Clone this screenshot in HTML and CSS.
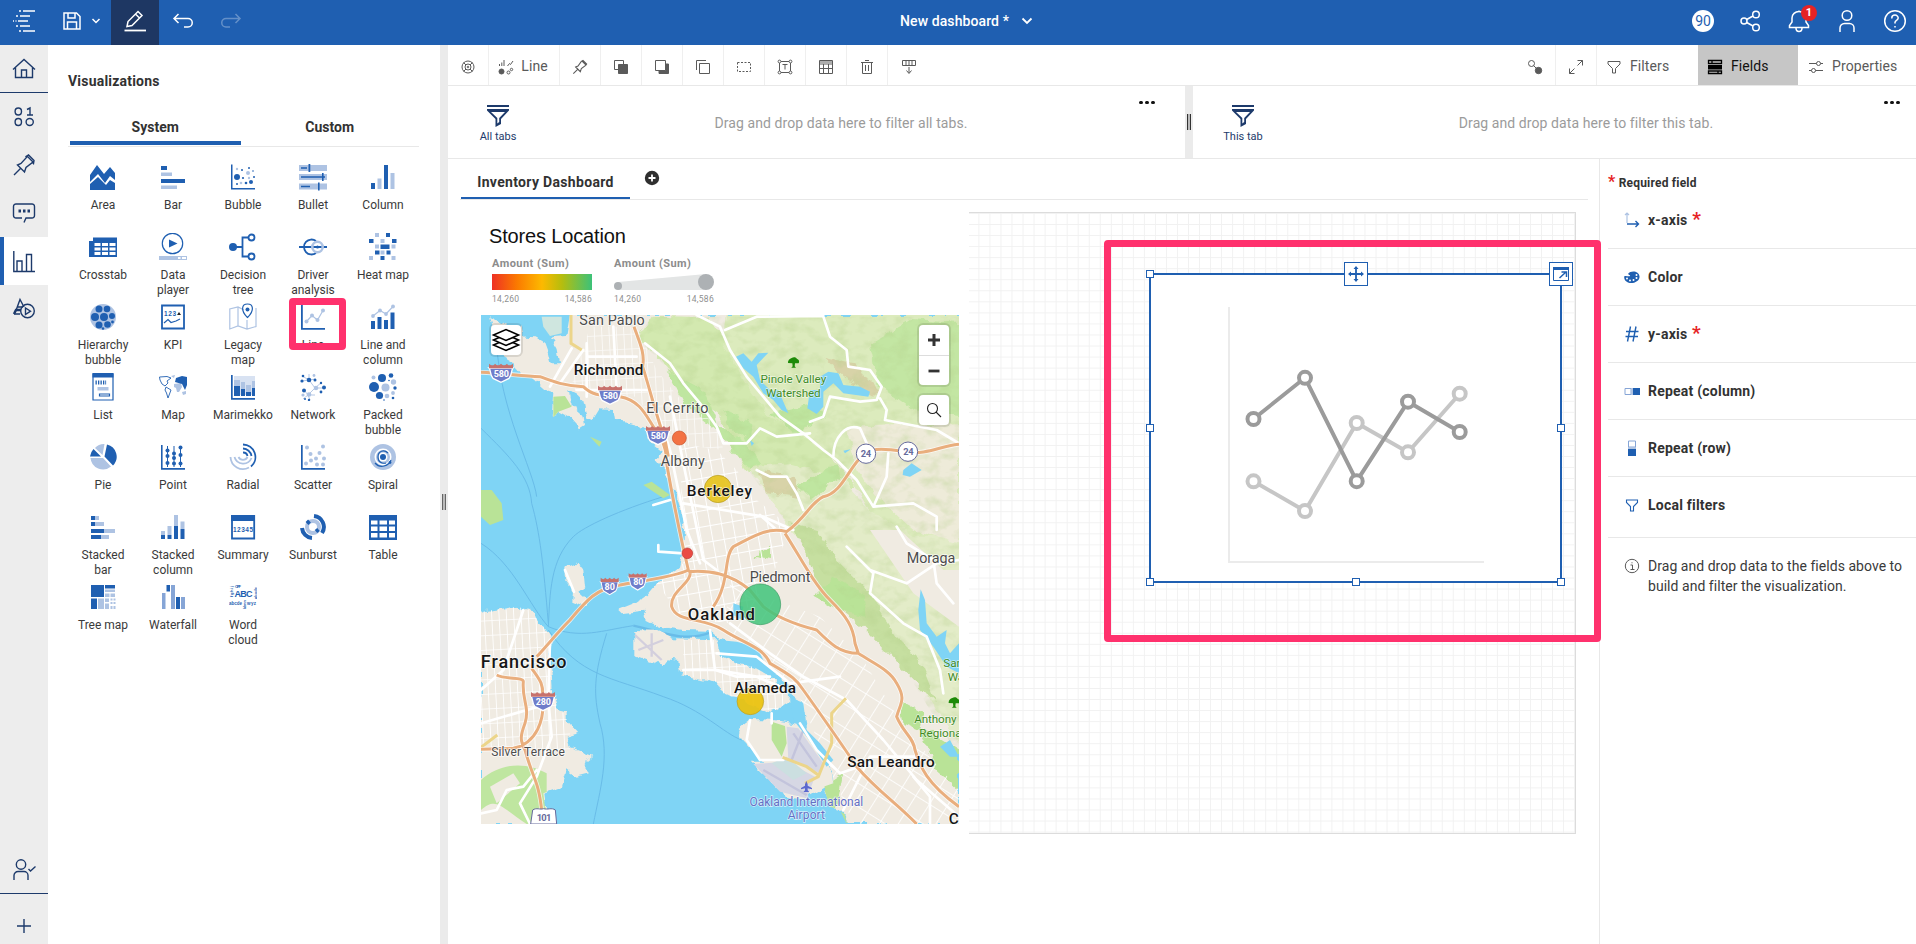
FILE: index.html
```html
<!DOCTYPE html>
<html lang="en">
<head>
<meta charset="utf-8">
<title>New dashboard</title>
<link rel="stylesheet" href="styles.css">
</head>
<body>
<header class="topbar">
  <div class="tb-item logo"><svg width="24" height="24" viewBox="0 0 24 24"><path d="M11 2H23M8 7H18M6 12H16M8 17H18M11 22H23M7 2h2M4 7h2M1 12h1M3.500 12h1M4 17h2M7 22h2" stroke="#fff" stroke-width="1.700"/></svg></div>
  <div class="tb-item save"><svg width="20" height="20" viewBox="0 0 20 20" class="w"><path d="M2 2H14.500L18 5.500V18H2ZM6 2V7H13V2M5.500 18V11H14.500V18"/></svg><svg width="10" height="8" viewBox="0 0 10 8" class="w"><path d="M1.500 2L5 5.500L8.500 2"/></svg></div>
  <div class="tb-item edit"><svg width="24" height="24" viewBox="0 0 24 24" class="w"><path d="M4 17.500L5 12.500L15 2.500L19 6.500L9 16.500ZM12.500 5L16.500 9"/><path d="M1.500 21.500H23" stroke-width="1.800"/></svg></div>
  <div class="tb-item"><svg width="22" height="18" viewBox="0 0 22 18" class="w"><path d="M6.500 2L2 6.500L6.500 11M2 6.500H16A4 4 0 0 1 16 15H12"/></svg></div>
  <div class="tb-item dim"><svg width="22" height="18" viewBox="0 0 22 18" class="w"><path d="M15.500 2L20 6.500L15.500 11M20 6.500H6A4 4 0 0 0 6 15H10"/></svg></div>
  <div class="title"><span>New dashboard *</span><svg width="12" height="8" viewBox="0 0 12 8" class="w"><path d="M1.500 1.500L6 6L10.500 1.500" stroke-width="1.800"/></svg></div>
  <div class="tb-right">
    <div class="tb-item"><span class="days">90</span></div>
    <div class="tb-item"><svg width="24" height="24" viewBox="0 0 24 24" class="w"><circle cx="5" cy="12" r="3"/><circle cx="17" cy="5.500" r="3.300"/><circle cx="17" cy="18.500" r="3.300"/><path d="M7.700 10.500L14 7M7.700 13.500L14 17"/></svg></div>
    <div class="tb-item bell"><svg width="24" height="24" viewBox="0 0 24 24" class="w"><path d="M12 3V1.500M2.500 18.500V16.500L5 13V9A7 6.500 0 0 1 19 9V13L21.500 16.500V18.500ZM9 19A3 3.500 0 0 0 15 19"/></svg><span class="badge">1</span></div>
    <div class="tb-item"><svg width="24" height="24" viewBox="0 0 24 24" class="w"><circle cx="12" cy="6.500" r="4.800"/><path d="M5 23V19A4.500 4.500 0 0 1 9.500 14.500H14.500A4.500 4.500 0 0 1 19 19V23"/></svg></div>
    <div class="tb-item"><svg width="24" height="24" viewBox="0 0 24 24" class="w"><circle cx="12" cy="12" r="10.300"/><path d="M8.800 9.500V9A3 2.700 0 0 1 15.200 9C15.200 11.500 12 11.200 12 13.500V14.500M12 17V18.500"/></svg></div>
  </div>
</header>
<div class="body">
  <nav class="rail">
    <div class="r-item r-line"><svg width="24" height="24" viewBox="0 0 24 24" class="n"><path d="M1 12.500L12 2.500L23 12.500M3.500 10.500V20.500H20.500V10.500M9.500 20.500V13H14.500V20.500"/></svg></div>
    <div class="r-item"><svg width="24" height="24" viewBox="0 0 24 24" class="n"><ellipse cx="6.300" cy="6.500" rx="3.200" ry="3.500"/><ellipse cx="6.300" cy="17" rx="3.200" ry="3.500"/><ellipse cx="17.700" cy="17" rx="3.600" ry="3.500"/><path d="M15 4.500L18 3V10M15 10H21"/></svg></div>
    <div class="r-item"><svg width="24" height="24" viewBox="0 0 24 24" class="n"><path d="M2 22L8.500 15.500M5.500 12L12.500 19L14 14.500L20.500 9.500L21.500 10.500L22 7.500L16.500 2L14 3.500L14.500 4.500L9 10.500ZM15 3L21.500 9.500"/></svg></div>
    <div class="r-item"><svg width="24" height="24" viewBox="0 0 24 24" class="n"><path d="M12 21.500L14 17H19.500A2.500 2.500 0 0 0 22.500 14.500V5.500A2.500 2.500 0 0 0 19.500 3H4.500A2.500 2.500 0 0 0 1.500 5.500V14.500A2.500 2.500 0 0 0 4.500 17H10"/><path d="M6.500 10h3M11 10h3M15.500 10h3" stroke-width="3" stroke-dasharray="2.500 9"/></svg></div>
    <div class="r-item on"><svg width="24" height="24" viewBox="0 0 24 24" class="n"><path d="M1.800 2V22.500H23M5 22V12H10V22M14.500 22V5.500H19.500V22"/></svg></div>
    <div class="r-item"><svg width="24" height="24" viewBox="0 0 24 24" class="n"><path d="M4 13.500L8 2.500L12 10M5 10H11M2 17H8"/><path d="M2 17L4 13H9" stroke-width="2.500"/><circle cx="15.500" cy="14" r="6.800"/><path d="M13.500 11V17.500L18.500 14.200Z"/></svg></div>
    <div class="r-gap"></div>
    <div class="r-item r-line"><svg width="24" height="24" viewBox="0 0 24 24" class="n"><circle cx="9" cy="6.500" r="4.700"/><path d="M2 22V17.500A4 4 0 0 1 6 13.500H12A4 4 0 0 1 16 17.500V22M16.500 11L18.500 13L23.500 8.500"/></svg></div>
    <div class="r-item r-add"><svg width="24" height="24" viewBox="0 0 24 24" class="n"><path d="M12 5V19M5 12H19"/></svg></div>
  </nav>
  <aside class="panel">
    <h2>Visualizations</h2>
    <div class="ptabs"><div class="ptab sel">System</div><div class="ptab">Custom</div></div>
    <div class="tiles">
      <div class="tile"><svg viewBox="0 0 28 28"><path class="d" d="M1 12L8 2L15 11L21 4L26 10V17L21 13L16 20L9 11L1 19Z"/><path class="d" d="M1 21L9 14L17 22L21 17L26 20V27H1Z"/></svg><span>Area</span></div>
      <div class="tile"><svg viewBox="0 0 28 28"><path class="d" d="M2 3h6v4H2zM2 16h24v4H2z"/><path class="l" d="M2 9.500h11v3.500H2zM2 22.500h16v3.500H2z"/></svg><span>Bar</span></div>
      <div class="tile"><svg viewBox="0 0 28 28"><path class="d" d="M2 1.500h1.500V25H26v1.500H2z"/><g class="d"><circle cx="8" cy="14" r="3"/><circle cx="22" cy="19" r="2"/><circle cx="13" cy="7" r="1"/><circle cx="20" cy="5" r="1"/><circle cx="25" cy="14" r="1"/><circle cx="17" cy="20" r="1.300"/><circle cx="8" cy="21" r="1"/><circle cx="14" cy="15" r="1.100"/><circle cx="24" cy="8" r=".8"/></g><g class="l"><circle cx="19" cy="10" r="2"/><circle cx="8" cy="6" r="1.200"/><circle cx="20" cy="15" r="1.200"/><circle cx="12" cy="20" r="1.300"/></g></svg><span>Bubble</span></div>
      <div class="tile"><svg viewBox="0 0 28 28"><path class="l" d="M0 2h28v6H0zM0 11h28v6H0zM0 20.500h28v6H0z"/><path class="d" d="M2 4.200h6v1.600H2zM9.500 1h1.800v8H9.500zM2 13.200h24v1.600H2zM23 10h1.600v8H23zM2 22.700h9v1.600H2zM19 19.500h1.600v8H19z"/></svg><span>Bullet</span></div>
      <div class="tile"><svg viewBox="0 0 28 28"><path class="d" d="M2 20h4v6H2zM15 2h4v24h-4z"/><path class="l" d="M8.500 15.500h4V26h-4zM21.500 10h4v16h-4z"/></svg><span>Column</span></div>

      <div class="tile"><svg viewBox="0 0 28 28"><path class="d" d="M4 4.500H28V24H0V8H4z"/><path d="M5.500 10h6v3h-6zM13 10h6v3h-6zM20.500 10h6v3h-6zM5.500 14.500h6v3h-6zM13 14.500h6v3h-6zM20.500 14.500h6v3h-6zM5.500 19h6v3h-6zM13 19h6v3h-6zM20.500 19h6v3h-6z" fill="#fff"/></svg><span>Crosstab</span></div>
      <div class="tile"><svg viewBox="0 0 28 28"><circle cx="13.500" cy="10.500" r="10.200" class="ds"/><path class="d" d="M10 6.500V14.500L18.500 10.500z"/><path class="l" d="M0 23h28v4H0z"/><path d="M19 24h2.500v2H19zM23 24h4v2h-4z" fill="#fff"/></svg><span>Data<br>player</span></div>
      <div class="tile"><svg viewBox="0 0 28 28"><circle class="d" cx="4" cy="14" r="4"/><path class="ds mid" d="M7 14H13M19 4.500H13.500V23.500H19"/><circle class="ds mid" cx="22.500" cy="4.500" r="3"/><circle class="ds mid" cx="22.500" cy="23.500" r="3"/></svg><span>Decision tree</span></div>
      <div class="tile"><svg viewBox="0 0 28 28"><path class="ds mid" d="M0 14H28M17 8A7.500 7.500 0 1 0 17 20"/><circle class="ls thick" cx="18.500" cy="14" r="5.200"/><circle class="d" cx="18.500" cy="14" r="1.500"/></svg><span>Driver analysis</span></div>
      <div class="tile"><svg viewBox="0 0 28 28"><path class="l" d="M6 0h4v4H6zM11.500 6h4v4h-4zM22.500 11.500h4v4h-4zM6 11.500h4v4H6zM0 23h4v4H0zM11.500 17.500h4v4h-4zM22.500 23h4v4h-4z"/><path class="d" d="M17 0h4v4h-4zM0 6h4.500v4H0zM23 6h4.500v4H23zM11.500 11.500h9v4.500h-9zM6 17.500h4.500v4H6zM17.500 17.500h4v4h-4zM11.500 23h4v4h-4z"/></svg><span>Heat map</span></div>

      <div class="tile"><svg viewBox="0 0 28 28"><circle class="l" cx="14" cy="14" r="13"/><g class="d"><circle cx="6" cy="14" r="4"/><circle cx="15" cy="14" r="4"/><circle cx="10" cy="6" r="3.500"/><circle cx="18" cy="6" r="3.300"/><circle cx="23" cy="13" r="3"/><circle cx="10" cy="22" r="3.500"/><circle cx="18.500" cy="21.500" r="3.300"/><circle cx="23.500" cy="19" r="1.400"/><circle cx="14" cy="25.500" r="1.300"/></g></svg><span>Hierarchy bubble</span></div>
      <div class="tile"><svg viewBox="0 0 28 28"><path class="ds mid" d="M3 2.500H25V25.500H3z"/><text x="5" y="13" class="svgt" font-size="6.500" textLength="12">123</text><path d="M18 12L20 9L22 12z" fill="#222"/><path class="ds" d="M5 20L9 16.500L12 19.500L17 18L21 16"/></svg><span>KPI</span></div>
      <div class="tile"><svg viewBox="0 0 28 28"><path class="ls" d="M15 7L9 4L.8 6V26L9 23L18 26L27 23.500V5M9 4V23M18 17V26"/><path class="ds" d="M18.500 14.500C11 7 13 1 18.500 1S26 7 18.500 14.500Z"/><circle class="d" cx="18.500" cy="6.500" r="2"/></svg><span>Legacy map</span></div>
      <div class="tile"><svg viewBox="0 0 28 28"><path class="d" d="M2 1.500h1.800V25H26v1.700H2z"/><path class="ls" d="M7.500 18.500L13 12.500L18.500 17L24 7.500"/><g class="l"><circle cx="7.500" cy="18.500" r="2"/><circle cx="13" cy="12.500" r="2"/><circle cx="18.500" cy="17" r="2"/><circle cx="24" cy="7.500" r="2"/></g></svg><span>Line</span></div>
      <div class="tile"><svg viewBox="0 0 28 28"><path class="d" d="M2 18h4v8H2zM8.500 14h4v12h-4zM15 17h4v9h-4zM21.500 9.500h4V26h-4z"/><path class="ls" d="M4 13L11 7.500L17 11L24 3.500"/><g class="l"><circle cx="4" cy="13" r="1.900"/><circle cx="11" cy="7.500" r="1.900"/><circle cx="17" cy="11" r="1.900"/><circle cx="24" cy="3.500" r="1.900"/></g></svg><span>Line and column</span></div>

      <div class="tile"><svg viewBox="0 0 28 28"><path class="ds" d="M4 1H24V27H4z"/><path class="d" d="M3.500 0h21v4.500h-21zM6.500 7.500h1.300v4H6.500zM9 7.500h1.300v4H9zM11.500 7.500h1.300v4h-1.300zM14 7.500h1.300v4H14zM16.300 7.500h.8v4h-.8z"/><path class="l" d="M8.500 14h11v3.500h-11z"/><path class="ds" d="M10.500 21h10v2h-10z"/></svg><span>List</span></div>
      <div class="tile"><svg viewBox="0 0 28 28"><path class="ds thin" d="M.5 4L8 3.500L12 5L8 8L9 10L6 13L3 11L1 7ZM7 14L12 17L9 25L7.500 20L6 17Z"/><path class="l" d="M15 11L22 10L23 14L20 19L18 19L17 15L15 14ZM12 3l4-1-1 3zM23 19l4-1v3l-3 1z"/><path class="d" d="M17 5L23 3L28 4V12L26 17L23 11L16 9Z"/></svg><span>Map</span></div>
      <div class="tile"><svg viewBox="0 0 28 28"><path d="M5 3h21v19H5z" fill="#d8e2f2"/><path class="l" d="M5 7h6v7H5zM12 9h4v9h-4zM17 12h5v8h-5zM23 8h3v8h-3z"/><path class="d" d="M2 2h1.700V25H26v1.700H2zM5 13h6v10H5zM12 16h4v7h-4zM17 19h5v4h-5zM23 15h3v8h-3z"/></svg><span>Marimekko</span></div>
      <div class="tile"><svg viewBox="0 0 28 28"><path class="ls thin" d="M10 7L3 3M10 7L3 8M10 7L10 1M10 7L17 6M10 7L16 15M16 15L9 22M9 22L5 17M9 22L4 26M9 22L11 27M9 22L16 22M16 15L23 9M16 15L26 15"/><g class="d"><circle cx="10" cy="7" r="2.300"/><circle cx="3" cy="8" r="1.600"/><circle cx="4" cy="3" r="1.300"/><circle cx="16" cy="7" r="1.500"/><circle cx="5" cy="17.500" r="2"/><circle cx="25" cy="14.500" r="2"/><circle cx="22" cy="10" r="1.200"/><circle cx="22" cy="19" r="1.400"/><circle cx="10" cy="27" r="1.200"/><circle cx="6" cy="26" r="1"/></g><g class="l"><circle cx="17" cy="15" r="2.300"/><circle cx="10" cy="21.500" r="2.300"/><circle cx="15" cy="2.500" r="1.400"/><circle cx="4" cy="22" r="1.600"/></g></svg><span>Network</span></div>
      <div class="tile"><svg viewBox="0 0 28 28"><g class="d"><circle cx="13" cy="5" r="4"/><circle cx="5" cy="14" r="5"/><circle cx="22" cy="2.500" r="2.300"/><circle cx="10.500" cy="22.500" r="3.600"/><circle cx="26" cy="15" r="1.700"/><circle cx="24" cy="25" r="1.300"/><circle cx="20" cy="7.500" r=".8"/><circle cx="15" cy="27" r=".8"/></g><g class="l"><circle cx="16.500" cy="14.500" r="4"/><circle cx="24.500" cy="9" r="2.700"/><circle cx="4.500" cy="4.500" r="2"/><circle cx="18" cy="23" r="2.300"/><circle cx="24" cy="20" r="1.900"/></g></svg><span>Packed bubble</span></div>

      <div class="tile"><svg viewBox="0 0 28 28"><path class="l" d="M1.500 15H14L22 23.500A12.500 12.500 0 0 1 1.500 15ZM6 5A12 12 0 0 1 15.500 1L13.500 12Z"/><path class="d" d="M18 1.500A12.500 12.500 0 0 1 24 22.500L15.500 13.500ZM4.500 6L12 13.500H1A13 13 0 0 1 4.500 6Z"/></svg><span>Pie</span></div>
      <div class="tile"><svg viewBox="0 0 28 28"><path class="d" d="M2 2h1.600V25H26v1.700H2zM8 3h1V24H8zM14.500 3h1V24h-1zM21 3h1V24h-1z"/><g class="d"><circle cx="8.500" cy="7.500" r="2"/><circle cx="8.500" cy="13" r="2"/><circle cx="8.500" cy="20" r="2"/><circle cx="15" cy="10.500" r="2"/><circle cx="15" cy="15" r="2"/><circle cx="15" cy="20.500" r="2"/><circle cx="21.500" cy="4.500" r="2"/><circle cx="21.500" cy="12" r="2"/><circle cx="21.500" cy="20.500" r="2"/></g></svg><span>Point</span></div>
      <div class="tile"><svg viewBox="0 0 28 28"><path class="ls mid" d="M1.500 14A12.500 12.500 0 0 0 20 24.500M5.500 14A9 9 0 0 0 22.500 15M9.500 14A5 5 0 0 0 18.500 14"/><path class="ds mid" d="M14 1.500A12.500 12.500 0 0 1 22 23.500M14 5.500A9 9 0 0 1 22.500 13M14 9.500A4.500 4.500 0 0 1 18.500 13"/></svg><span>Radial</span></div>
      <div class="tile"><svg viewBox="0 0 28 28"><path class="d" d="M2 2h1.700V25H26v1.700H2z"/><g class="l"><circle cx="8" cy="4.500" r="2"/><circle cx="24" cy="3.500" r="2"/><circle cx="11.500" cy="11" r="2"/><circle cx="20.500" cy="10" r="2"/><circle cx="25" cy="15.500" r="2"/><circle cx="17" cy="15.500" r="2"/><circle cx="7" cy="20.500" r="2"/><circle cx="12" cy="17.500" r="2"/><circle cx="18" cy="21.500" r="2"/><circle cx="24" cy="21.500" r="2"/></g></svg><span>Scatter</span></div>
      <div class="tile"><svg viewBox="0 0 28 28"><circle class="l" cx="14" cy="14" r="13"/><circle cx="14" cy="14" r="8.500" fill="#fff"/><circle class="l" cx="14" cy="14" r="7"/><circle cx="14" cy="14" r="4.500" fill="#fff"/><circle class="d" cx="14" cy="14" r="3"/><path class="ds" d="M19 10C15 6 9 8 9 14C9 19 13 21 17 20M22 17C20 23 11 26 6 20"/><circle class="d" cx="21" cy="19.500" r="1.400"/></svg><span>Spiral</span></div>

      <div class="tile"><svg viewBox="0 0 28 28"><path class="d" d="M2 3h4v4H2zM2 9h4v4H2zM2 16h13v4H2zM2 22h10v4H2z"/><path class="l" d="M6 3h4v4H6zM6 9h9v4H6zM15 16h11v4H15zM12 22h8v4h-8z"/></svg><span>Stacked bar</span></div>
      <div class="tile"><svg viewBox="0 0 28 28"><path class="l" d="M2 18h4v4H2zM8.500 13h4v9h-4zM15 2h4v12h-4zM21.500 8.500h4V16h-4z"/><path class="d" d="M2 22h4v4H2zM8.500 22h4v4h-4zM15 13h4v13h-4zM21.500 16h4v10h-4z"/></svg><span>Stacked column</span></div>
      <div class="tile"><svg viewBox="0 0 28 28"><path class="ds mid" d="M3 3H25.200V25.500H3z"/><path class="d" d="M2 2h24v6H2z"/><text x="4" y="19" class="svgt" font-size="6.500" textLength="20">12345</text></svg><span>Summary</span></div>
      <div class="tile"><svg viewBox="0 0 28 28"><circle class="ls wide" cx="14" cy="14" r="6"/><path class="ds wide" d="M15 3A11 11 0 0 1 23 20M3 15A11 11 0 0 0 13 25"/><path class="ds wide" d="M8 10.500L10.500 8M17 18.500L19.500 16.500"/></svg><span>Sunburst</span></div>
      <div class="tile"><svg viewBox="0 0 28 28"><path class="d" d="M0 2h28v25H0z"/><path d="M2 7.500h6.500v4H2zM10.500 7.500H18v4h-7.500zM20 7.500h6v4h-6zM2 13.500h6.500v4.500H2zM10.500 13.500H18V18h-7.500zM20 13.500h6V18h-6zM2 20h6.500v4.500H2zM10.500 20H18v4.500h-7.500zM20 20h6v4.500h-6z" fill="#fff"/></svg><span>Table</span></div>

      <div class="tile"><svg viewBox="0 0 28 28"><path class="d" d="M2 2h13v12H2zM2 15.500h6V26H2zM16 2h10v3.500H16z"/><path class="l" d="M9 15.500h6V26H9zM16 6.500h10V9H16zM16 10.500h4.500V14H16zM21.500 10.500H26V14h-4.500zM16 15.500h4V19h-4zM21.500 15.500h2v2h-2zM24.500 15.500h2v2h-2zM16 20.500h4V26h-4zM21.500 19h2v2h-2zM24.500 19h2v2h-2zM21.500 23h2v3h-2zM24.500 23h2v3h-2z"/></svg><span>Tree map</span></div>
      <div class="tile"><svg viewBox="0 0 28 28"><path d="M3 10h3.500v16H3zM12 2h4v24h-4zM22 14h4v12h-4z" fill="#86a5d6"/><path class="d" d="M7.500 2H11v6.500H7.500zM17 14h4v12h-4z"/></svg><span>Waterfall</span></div>
      <div class="tile"><svg viewBox="0 0 28 28"><g class="svgt"><text x="5.500" y="14" font-size="9" textLength="18">ABC</text><text x="0" y="21.500" font-size="4.500" textLength="13">abcde</text><text x="18" y="21.500" font-size="4.500" textLength="9">wyz</text><text x="6" y="5" font-size="4" textLength="6">OPF</text><text transform="translate(4 14) rotate(-90)" font-size="4" textLength="11">fghij</text><text transform="translate(27.500 16) rotate(-90)" font-size="4" textLength="12">abode</text><text transform="translate(16.500 26) rotate(-90)" font-size="4" textLength="9">klmn</text></g></svg><span>Word<br>cloud</span></div>
    </div>
    <div class="mark mark-tile"></div>
  </aside>
  <div class="splitter"><i></i></div>
  <main class="main">
    <div class="toolbar">
      <div class="t-item"><svg width="16" height="16" viewBox="0 0 16 16" class="g"><circle cx="8" cy="8" r="6"/><circle cx="8" cy="8" r="3"/><circle cx="8" cy="8" r=".8"/><path d="M3.500 3.500L6 6M12.500 3.500L10 6M3.500 12.500L6 10M12.500 12.500L10 10"/></svg></div>
      <div class="t-item t-line"><svg width="16" height="16" viewBox="0 0 16 16" class="g"><path d="M1.500 7V5M3.800 7V3.500M6 7V1M9.500 7L11.500 4.500L12.500 5.500L15 2"/><circle cx="3.500" cy="12.500" r="2.500" fill="#5a5a5a"/><circle cx="10.500" cy="13.500" r="1.500"/><circle cx="13.500" cy="10.500" r="1.200"/></svg><span>Line</span></div>
      <div class="t-item"><svg width="16" height="16" viewBox="0 0 24 24" class="g pin"><path d="M2 22L8.500 15.500M5.500 12L12.500 19L14 14.500L20.500 9.500L22 7.500L16.500 2L14 3.500L9 10.500ZM15 3L21.500 9.500"/></svg></div>
      <div class="t-item"><svg width="16" height="16" viewBox="0 0 16 16" class="g"><path d="M1.500 1.500H10.500V10.500H1.500z"/><path d="M5.500 5.500H14.500V14.500H5.500z" fill="#5a5a5a"/></svg></div>
      <div class="t-item"><svg width="16" height="16" viewBox="0 0 16 16" class="g"><path d="M5 5H14.500V14.500H5z" fill="#5a5a5a"/><path d="M1.500 1.500H11.500V11.500H1.500z" fill="#fff"/></svg></div>
      <div class="t-item"><svg width="16" height="16" viewBox="0 0 16 16" class="g"><path d="M4.500 4.500H14.500V14.500H4.500zM1.500 11V1.500H11"/></svg></div>
      <div class="t-item"><svg width="16" height="16" viewBox="0 0 16 16" class="g"><path d="M1.500 3.500H14.500V12.500H1.500z" stroke-dasharray="2 1.500"/></svg></div>
      <div class="t-item"><svg width="16" height="16" viewBox="0 0 16 16" class="g"><path d="M4 2.500H12M4 13.500H12M2.500 4V12M13.500 4V12M5.500 5.500H10.500M8 5.500V10.500"/><circle cx="2.500" cy="2.500" r="1.400"/><circle cx="13.500" cy="2.500" r="1.400"/><circle cx="2.500" cy="13.500" r="1.400"/><circle cx="13.500" cy="13.500" r="1.400"/></svg></div>
      <div class="t-item"><svg width="16" height="16" viewBox="0 0 16 16" class="g"><path d="M1.500 1.500H14.500V14.500H1.500zM1.500 5H14.500M1.500 9.500H14.500M5.500 5V14M10.500 5V14M1.500 3H14.500"/></svg></div>
      <div class="t-item"><svg width="16" height="16" viewBox="0 0 16 16" class="g"><path d="M2 3.500H14M3.500 3.500V14.500H12.500V3.500M6 1.500H10M6.500 6V12M9.500 6V12"/></svg></div>
      <div class="t-item last"><svg width="16" height="16" viewBox="0 0 16 16" class="g"><path d="M1.500 1.500H14.500V6.500H1.500zM5 1.500V6.500M8 1.500V6.500M11 1.500V6.500M8 8V14M5.500 11.500L8 14.500L10.500 11.500"/></svg></div>
      <div class="t-gap"></div>
      <div class="t-item"><svg width="16" height="16" viewBox="0 0 16 16" class="g"><circle cx="4.500" cy="4.500" r="3"/><path d="M6.500 6.500L9 9"/><circle cx="11.500" cy="11.500" r="3.200" fill="#5a5a5a"/></svg></div>
      <div class="t-item"><svg width="16" height="16" viewBox="0 0 16 16" class="g"><path d="M9.500 1.500H14.500V6.500M14.500 1.500L9.500 6.500M6.500 14.500H1.500V9.500M1.500 14.500L6.500 9.500"/></svg></div>
      <div class="t-item t-filters"><svg width="16" height="16" viewBox="0 0 16 16" class="g"><path d="M2 2.500H14V5L9.500 9.500V14H6.500V9.500L2 5Z"/></svg><span>Filters</span></div>
      <div class="t-item t-fields"><svg width="16" height="16" viewBox="0 0 16 16" fill="none" stroke="#000" stroke-width="1.300"><path d="M1.500 1.500H14.500V4.500H1.500zM1.500 12H14.500V14.500H1.500zM5 1.500V4M11 12V14.500"/><path d="M1 6H15V10.500H1z" fill="#000" stroke="none"/></svg><span>Fields</span></div>
      <div class="t-item t-props"><svg width="16" height="16" viewBox="0 0 16 16" class="g"><path d="M1 4.500H8.500M12.500 4.500H15M1 11.500H3.500M7.500 11.500H15"/><circle cx="10.500" cy="4.500" r="2"/><circle cx="5.500" cy="11.500" r="2"/></svg><span>Properties</span></div>
    </div>
    <div class="filters">
      <div class="fpane f-all"><div class="fico"><svg width="22" height="22" viewBox="0 0 22 22"><path d="M0 0H22V2H0zM0 4H22V5.500L14 14V19L8.500 22V14L0 5.500zM4 7L10.300 13V18.500L12.200 17V13L18 7z" fill="#1d3a6b" fill-rule="evenodd"/></svg><span>All tabs</span></div><div class="fhint">Drag and drop data here to filter all tabs.</div><div class="fdots"><i></i><i></i><i></i></div></div>
      <div class="fsplit"><i></i></div>
      <div class="fpane"><div class="fico"><svg width="22" height="22" viewBox="0 0 22 22"><path d="M0 0H22V2H0zM0 4H22V5.500L14 14V19L8.500 22V14L0 5.500zM4 7L10.300 13V18.500L12.200 17V13L18 7z" fill="#1d3a6b" fill-rule="evenodd"/></svg><span>This tab</span></div><div class="fhint">Drag and drop data here to filter this tab.</div><div class="fdots"><i></i><i></i><i></i></div></div>
    </div>
    <div class="work">
      <section class="stage">
        <div class="dtabs"><div class="dtab">Inventory Dashboard</div><svg class="plus" width="16" height="16" viewBox="0 0 16 16"><circle cx="8" cy="8" r="7.200" fill="#2f2f2f"/><path d="M8 4.500V11.500M4.500 8H11.500" stroke="#fff" stroke-width="1.800"/></svg></div>
        <div class="canvas">
          <div class="sheet"></div>
          <article class="mapw">
            <h3>Stores Location</h3>
            <div class="legends">
              <div class="legend"><b>Amount (Sum)</b><div class="ramp"></div><p><span>14,260</span><span>14,586</span></p></div>
              <div class="legend"><b>Amount (Sum)</b><svg width="100" height="16" viewBox="0 0 100 16"><path d="M4 8L92 0V16H4z" fill="#e3e5e5"/><circle cx="4" cy="12" r="4" fill="#adb1b4"/><circle cx="92" cy="8" r="8" fill="#adb1b4"/></svg><p><span>14,260</span><span>14,586</span></p></div>
            </div>
            <div class="map">
              <svg width="478" height="509" viewBox="33 315 1434 1527">
                <defs>
                  <path id="east" d="M60 315L75 330 110 345 155 350 160 380 200 382 230 400 245 460 267 460 258 410 240 382 290 378 300 315H1467V1842H1130L1110 1800 1080 1790 1060 1730 1090 1720 1085 1680 1010 1560 995 1475 970 1460 960 1420 930 1400 880 1360 860 1315 800 1305 745 1285 720 1262 640 1260 570 1250 530 1230 520 1202 455 1210 445 1200 495 1180 530 1155 560 1120 600 1095 630 1070 640 1030 642 960 632 900 615 840 600 820 585 780 560 750 575 725 530 690 530 665 500 640 435 630 430 600 385 598 365 630 350 622 340 575 320 555 292 540 300 580 340 615 345 645 330 655 300 622 270 605 245 622 250 550 235 545 190 505 150 490 125 455 100 440 80 420Z"/>
                  <g id="isles">
                    <path d="M490 1260L560 1262 610 1285 740 1288 750 1335 800 1360 870 1375 930 1420 958 1440 955 1475 905 1510 860 1490 760 1450 740 1415 680 1405 630 1390 625 1350 590 1345 575 1365 490 1335Z"/>
                    <path d="M800 1560L840 1530 905 1532 990 1545 1060 1630 1085 1690 1090 1720 1010 1765 950 1760 845 1655 880 1655 820 1590Z"/>
                    <path d="M33 1205L140 1190 180 1200 220 1250 245 1290 240 1360 245 1440 265 1505 290 1510 290 1530 325 1570 290 1580 300 1615 370 1640 340 1665 360 1690 320 1700 290 1680 275 1730 220 1750 225 1790 260 1842H33Z"/>
                    <path d="M283 1070L305 1060 340 1080 345 1130 325 1145 352 1170 350 1192 310 1175 312 1145 285 1110Z"/>
                  </g>
                  <clipPath id="landclip"><use href="#east"/></clipPath>
                  <clipPath id="isleclip"><path d="M490 1260L560 1262 610 1285 740 1288 750 1335 800 1360 870 1375 930 1420 958 1440 955 1475 905 1510 860 1490 760 1450 740 1415 680 1405 630 1390 625 1350 590 1345 575 1365 490 1335ZM33 1205L140 1190 180 1200 220 1250 245 1290 240 1360 245 1440 265 1505 290 1510 290 1530 325 1570 290 1580 300 1615 340 1640 275 1730 220 1750 225 1790 260 1842H33Z"/></clipPath>
                  <pattern id="gridA" width="34" height="48" patternUnits="userSpaceOnUse" patternTransform="rotate(-10)"><path d="M0 0H34M0 0V48" stroke="#fff" stroke-width="6" fill="none"/></pattern>
                  <pattern id="gridB" width="48" height="60" patternUnits="userSpaceOnUse" patternTransform="rotate(32)"><path d="M0 0H48M0 0V60" stroke="#fff" stroke-width="6" fill="none"/></pattern>
                  <pattern id="gridC" width="22" height="44" patternUnits="userSpaceOnUse" patternTransform="rotate(-3)"><path d="M0 0H22M0 0V44" stroke="#fff" stroke-width="5" fill="none"/></pattern>
                  <filter id="rough" x="0" y="0" width="1" height="1"><feTurbulence type="fractalNoise" baseFrequency=".035" numOctaves="2" seed="4"/><feDisplacementMap in="SourceGraphic" scale="26" xChannelSelector="R" yChannelSelector="G"/></filter>
                  <filter id="relief" x="0" y="0" width="1" height="1"><feTurbulence type="fractalNoise" baseFrequency=".022 .03" numOctaves="3" seed="11"/><feColorMatrix values="0 0 0 0 .45 0 0 0 0 .62 0 0 0 0 .25 2.400 0 0 0 -1.050"/><feComposite in2="SourceGraphic" operator="in"/></filter>
                  <g id="i580"><path d="M-36-13C-30-8-34 8-24 18L0 30 24 18C34 8 30-8 36-13Z" fill="#6f7dca" stroke="#fff" stroke-width="4"/><path d="M-36-26C-28-20-22-20-18-26-12-20-6-20 0-26 6-20 12-20 18-26 22-20 28-20 36-26V-12H-36Z" fill="#c7716c"/></g>
                  <g id="tree"><path d="M-17 3C-18-5-12-10-6-12 0-16 8-14 10-9 17-8 18 2 14 4H4L3 13 7 17H-7L-3 13-4 4Z" fill="#1d8a08"/></g>
                </defs>
                <rect x="33" y="315" width="1434" height="1527" fill="#7fd4f5"/>
                <g fill="none" stroke="#69bce8" stroke-width="3"><path d="M33 655C120 740 180 800 185 880C210 970 220 1060 235 1240M80 400C90 600 190 780 200 860M580 860C450 900 340 950 310 980C240 1050 240 1150 235 1250M33 1000C130 1060 180 1190 235 1250M235 1250C330 1290 400 1260 490 1247M235 1260C330 1400 420 1400 580 1460C700 1500 760 1570 815 1590M410 1270C370 1400 370 1450 390 1540C420 1640 390 1740 370 1842"/><path d="M490 1247C560 1260 640 1300 720 1268" stroke-width="7"/></g>
                <g filter="url(#rough)" fill="#f0ebe2"><use href="#east"/><use href="#isles"/></g>
                <path d="M215 320H275V370L240 378 220 350Z" fill="#cfe6df"/>
                <g clip-path="url(#landclip)">
                  <g filter="url(#rough)">
                    <path d="M500 390L545 320 720 325 770 400 830 490 900 590 980 650 1040 690 1090 750 1160 830 1060 860 980 850 880 770 830 790 790 700 740 610 640 540 560 430Z" fill="#d3e9b0"/>
                    <path d="M770 315H1480V1000H1320L1200 900 1130 780 1020 690 900 620 840 540 760 400Z" fill="#dcebbd"/>
                    <path d="M830 770L960 760 1110 800 1200 900 1330 980 1480 980V1620L1400 1500 1300 1340 1150 1190 1050 1060 960 960 900 860Z" fill="#e3ecc8"/>
                    <path d="M1130 650L1467 640V1000L1330 960 1230 870 1160 780Z" fill="#eeebd9"/>
                    <path d="M1200 400L1320 330 1480 340V620L1330 600 1220 520Z" fill="#c3e6a3"/>
                    <path d="M590 480L700 540 740 640 830 700 880 760 830 770 740 660 640 580ZM760 600L850 640 840 700 780 650ZM900 610L1040 580 1070 620 980 670ZM980 830L1100 760 1110 800 1020 870Z" fill="#bfe6a0"/>
                    <path d="M960 940L1040 960 1110 1060 1200 1150 1280 1280 1350 1350 1400 1480 1320 1400 1180 1250 1060 1160 1010 1030Z" fill="#c6dfa0"/>
                    <path d="M1090 1100L1180 1150 1190 1220 1100 1200 1030 1160ZM1290 1470L1360 1510 1350 1560 1300 1540ZM1340 1540L1467 1620V1740L1400 1680ZM850 1040L900 1010 900 1050ZM1060 1730L1120 1690 1100 1790 1130 1842H1080Z" fill="#b9e397"/>
                    <path d="M1060 440L1150 460 1230 540 1210 560 1120 500ZM860 780L970 800 990 860 890 850Z" fill="#d8d3a8"/>
                  </g>
                  <path d="M500 390L545 320H1467V1640L1300 1370 1060 1090 900 870 740 650 560 440Z" filter="url(#relief)" opacity=".34"/>
                  <path d="M1200 960L1290 960 1420 1080 1467 1080V1250L1330 1150Z" fill="#f0ebe2"/>
                </g>
                <g clip-path="url(#landclip)">
                  <path d="M630 700L740 720 800 780 860 870 960 950 900 1120 790 1240 640 1230 560 1120 640 1060Z" fill="url(#gridA)"/>
                  <path d="M360 350L500 350 560 480 640 580 740 640 760 720 600 700 500 560 300 540Z" fill="url(#gridC)" opacity=".75"/>
                  <path d="M780 1120L1050 1220 1180 1350 1300 1550 1467 1740V1842H1150L1080 1680 980 1440 760 1270Z" fill="url(#gridB)" opacity=".85"/>
                </g>
                <g clip-path="url(#isleclip)"><path d="M33 1190H300V1620H33zM640 1290H970V1500H640z" fill="url(#gridC)"/><path d="M33 1710C100 1650 180 1660 230 1690V1842H170C90 1790 80 1760 33 1800Z" fill="#bfe6a0"/><path d="M60 1730L130 1690 150 1720 80 1780Z" fill="#f0ebe2"/></g>
                <path d="M905 1535L945 1548 950 1600 935 1640 905 1590ZM250 560L285 558 305 590 265 605 250 622ZM360 680L395 695 388 710ZM520 825L545 815 600 855 580 865ZM33 840L65 840 95 880 100 930 60 945 33 920Z" fill="#b9e397"/>
                <path d="M950 1550L985 1555 1060 1660 1050 1690 955 1650ZM850 1662L950 1655 1035 1700 1010 1765 930 1745Z" fill="#d6d7e4"/><path d="M905 1660L950 1640 1010 1690 970 1710Z" fill="#cbdfe0"/><path d="M970 1570L1040 1670M1000 1560L965 1650M880 1680L1010 1755" stroke="#c3c4dc" stroke-width="7" fill="none"/>
                <path d="M495 1275L575 1350M505 1320L580 1290M545 1270V1340" stroke="#d3cfdd" stroke-width="7" fill="none"/>
                <g fill="#7fd4f5"><path d="M798 440L820 430 845 455 865 430 895 428 860 465 870 510 905 545 925 540 940 575 955 610 935 600 910 570 880 550 850 500 820 475ZM1050 500L1075 485 1105 490 1120 525 1170 530 1200 545 1195 560 1120 550 1090 520 1060 545 1060 590 1040 612 1012 595 1020 540 1050 540ZM1300 780L1325 760 1355 780 1320 800 1298 795ZM1120 722L1142 718 1125 730ZM840 690L852 700 845 708Z"/><path d="M1352 1138L1365 1170 1370 1240 1400 1280 1430 1260 1425 1300 1440 1330 1467 1300V1390L1430 1370 1390 1310 1350 1260 1345 1200ZM1410 1610L1440 1590 1467 1640 1440 1640ZM745 1290L800 1295 860 1310 890 1370 925 1390 905 1402 850 1370 790 1350 750 1330ZM960 1460L1000 1480 1010 1560 1050 1600 1090 1650 1070 1670 1010 1580 970 1530ZM790 1180L820 1190 815 1230 790 1215ZM225 395L250 398 262 455 248 458ZM300 552L322 560 345 620 330 610Z"/></g>
                <g fill="none" stroke="#fff" stroke-width="8" stroke-linejoin="round" stroke-linecap="round">
                  <path d="M305 415L240 530M340 420L270 520M320 540L540 540M680 315L750 350 780 420 830 500 880 560 930 620 1000 670 1060 720 1100 750 1160 810 1210 890 1330 880 1400 920 1400 960M1060 320L1080 380 1130 420 1135 470 1200 480 1235 530 1220 570 1170 575 1080 560 1060 620 1020 635M1230 565L1250 600 1245 630 1400 660 1467 700M765 360L860 320 1060 318M1090 740C1090 680 1130 640 1170 655L1190 700M1255 730L1250 800 1210 890"/>
                  <path d="M525 400L600 460 640 520 690 580 740 650 760 700 830 700 870 655 920 680 1020 670M860 780L900 800 950 800 980 850 1000 900"/>
                  <path d="M600 560L640 760 700 1050 740 1080M518 470L540 540 600 720 650 960 690 1060M640 880L880 920 970 960M870 915L920 960"/>
                  <path d="M780 1240L900 1330 1000 1400 1130 1470 1240 1590 1340 1710 1467 1820M720 1260L735 1380 800 1400 900 1400M740 1330L860 1340 960 1420 1110 1400M640 1380L740 1380 860 1400 930 1430M990 1540L1040 1620 1110 1690 1200 1660M840 1530L830 1590 870 1650 940 1650M905 1510V1540M1120 1800L1200 1640 1340 1640"/>
                  <path d="M1130 1010L1200 1080 1310 1120 1400 1060 1467 1050M1140 1020L1210 1090 1200 1150 1300 1240 1370 1280 1410 1380 1420 1450M1280 950L1310 1000 1390 1050 1400 1120 1450 1180M1380 1842V1760L1330 1700"/>
                  <path d="M565 1005V1025L640 1030M550 885L600 870M240 1290L235 1470 245 1580 200 1700 150 1780 180 1842M33 1810L80 1800 110 1740 160 1730 200 1680M33 1440L100 1380 160 1200M33 1540L240 1480M285 1080L312 1145M350 400V560M350 440H500M430 350L440 540"/>
                </g>
                <g fill="none" stroke="#ecd58a" stroke-width="9"><path d="M303 315V400L335 420M1128 1465L1085 1510V1600L1065 1650 1045 1700 1005 1720M938 1642L1010 1670 1045 1695M33 1612L82 1575"/></g>
                <g fill="none" stroke="#fff" stroke-opacity=".7" stroke-width="14"><path id="hw" d="M33 487C100 490 150 497 210 500C250 515 280 527 340 530C370 560 400 556 450 560C510 570 530 620 550 650C580 690 590 720 590 760C600 820 615 900 640 1015L655 1080C620 1100 500 1115 450 1125C380 1135 350 1170 300 1230C260 1270 220 1320 200 1340M492 350C510 400 525 430 518 470C540 540 560 620 585 690L595 740M655 1085C720 1080 780 1090 840 1140L880 1190C930 1230 1000 1250 1040 1260C1080 1300 1110 1330 1165 1330C1210 1360 1260 1380 1280 1420C1310 1470 1290 1480 1280 1520C1300 1570 1330 1580 1335 1620C1350 1670 1370 1720 1467 1790M660 1080C670 1120 600 1140 605 1190C620 1240 700 1220 760 1260C820 1300 880 1310 900 1360C970 1400 980 1410 1000 1440C1050 1510 1100 1580 1160 1670C1220 1740 1280 1780 1340 1842M730 1190C780 1120 760 1040 790 1010C850 980 890 950 950 965C1010 920 1020 880 1060 860C1110 850 1130 790 1165 750C1190 710 1240 715 1300 725C1380 735 1400 710 1467 703M945 970C990 1040 1030 1120 1080 1170C1130 1220 1150 1250 1155 1300L1165 1330M80 1395C110 1410 160 1400 160 1415C155 1470 180 1490 165 1540C150 1580 150 1590 165 1620C190 1710 205 1710 215 1800M185 1375C210 1410 220 1420 218 1460C225 1530 200 1600 130 1615L33 1618"/></g>
                <use href="#hw" fill="none" stroke="#e9ae7d" stroke-width="9"/>
                <g stroke-width="2"><circle cx="628" cy="684" r="21" fill="#f26a38" fill-opacity=".94" stroke="#c4512b"/><circle cx="744" cy="837" r="41" fill="#e5c113" fill-opacity=".88" stroke="#b39a22"/><circle cx="652" cy="1030" r="16" fill="#ea4b43" stroke="#b93832"/><circle cx="871" cy="1183" r="61" fill="#40c47a" fill-opacity=".85" stroke="#3b9b63"/><circle cx="841" cy="1474" r="40" fill="#ebc20c" fill-opacity=".93" stroke="#b69e2a"/></g>
                <use href="#i580" x="93" y="487"/><use href="#i580" x="420" y="553"/><use href="#i580" x="564" y="674"/><use href="#i580" transform="translate(419 1127) scale(.75 .9)"/><use href="#i580" transform="translate(503 1113) scale(.75 .9)"/><use href="#i580" x="219" y="1472"/>
                <g class="sh"><text x="94" y="500" textLength="46">580</text><text x="421" y="566" textLength="46">580</text><text x="565" y="687" textLength="46">580</text><text x="419" y="1139" textLength="31">80</text><text x="505" y="1124" textLength="31">80</text><text x="220" y="1485" textLength="46">280</text></g>
                <path d="M188 1800C200 1792 210 1800 221 1796C232 1800 245 1792 256 1800L260 1842H182Z" fill="#fff" stroke="#666a9c" stroke-width="3"/>
                <g fill="#fff" stroke="#666a9c" stroke-width="3"><circle cx="1188" cy="731" r="29"/><circle cx="1314" cy="725" r="29"/></g>
                <g class="rt"><text x="222" y="1834" textLength="44">101</text><text x="1188" y="741" textLength="31">24</text><text x="1315" y="735" textLength="31">24</text></g>
                <use href="#tree" x="971" y="456"/><use href="#tree" x="1453" y="1476"/>
                <path d="M1009 1713L1013 1723V1727L1026 1734V1738L1013 1735V1741L1018 1746H1000L1005 1741V1735L993 1738V1734L1005 1727V1723Z" fill="#5b68cf"/>
                <g class="city"><text x="416" y="495" textLength="209">Richmond</text><text x="748" y="858" textLength="196">Berkeley</text><text x="754" y="1229" textLength="202" class="big">Oakland</text><text x="161" y="1374" textLength="257" class="huge">Francisco</text><text x="885" y="1448" textLength="186">Alameda</text><text x="1263" y="1672" textLength="262">San Leandro</text><text x="1451" y="1841">C</text></g>
                <g class="town"><text x="426" y="346" textLength="196">San Pablo</text><text x="622" y="608" textLength="186">El Cerrito</text><text x="638" y="768" textLength="132">Albany</text><text x="930" y="1116" textLength="182">Piedmont</text><text x="1383" y="1059" textLength="146">Moraga</text><text x="174" y="1639" textLength="221" class="small">Silver Terrace</text></g>
                <g class="park"><text x="970" y="519" textLength="197">Pinole Valley</text><text x="970" y="562" textLength="164">Watershed</text><text x="1420" y="1370" class="cut">San</text><text x="1433" y="1413" class="cut">Wat</text><text x="1396" y="1539" textLength="127">Anthony</text><text x="1348" y="1582" class="cut">Regional</text></g>
                <g class="air"><text x="1009" y="1788" textLength="341">Oakland International</text><text x="1009" y="1828" textLength="112">Airport</text></g>
              </svg>
              <div class="mbtn layers"><svg width="30" height="30" viewBox="0 0 30 30" fill="#fff" stroke="#000" stroke-width="1.600"><path d="M2.500 20L15 14.500 27.500 20 15 25.500Z"/><path d="M2.500 15L15 9.500 27.500 15 15 20.500Z"/><path d="M2.500 10L15 4.500 27.500 10 15 15.500Z"/></svg></div>
              <div class="mctl"><div class="mbtn zoomer"><div><svg width="14" height="14" viewBox="0 0 14 14"><path d="M7 1V13M1 7H13" stroke="#333" stroke-width="3"/></svg></div><div><svg width="14" height="14" viewBox="0 0 14 14"><path d="M1.500 7H12.500" stroke="#333" stroke-width="2.800"/></svg></div></div>
              <div class="mbtn"><svg width="16" height="16" viewBox="0 0 16 16" fill="none" stroke="#222" stroke-width="1.100"><circle cx="6.500" cy="6.500" r="5"/><path d="M10 10L15 15"/></svg></div></div>
            </div>
          </article>
          <article class="linew">
            <svg width="256" height="256" viewBox="0 0 256 256" fill="none"><path d="M1 0V255H256" stroke="#ebebeb" stroke-width="2"/>
              <path d="M25.500 174.300L77 204L128.700 116L180 145.300L231.700 86.700" stroke="#c6c6c6" stroke-width="4"/><path d="M25.500 112L77 70.800L128.700 174.200L180 94.700L231.700 125" stroke="#9b9b9b" stroke-width="4"/>
              <g stroke="#c6c6c6" stroke-width="4" fill="#fff"><circle cx="25.500" cy="174.300" r="6"/><circle cx="77" cy="204" r="6"/><circle cx="128.700" cy="116" r="6"/><circle cx="180" cy="145.300" r="6"/><circle cx="231.700" cy="86.700" r="6"/></g>
              <g stroke="#9b9b9b" stroke-width="4" fill="#fff"><circle cx="25.500" cy="112" r="6"/><circle cx="77" cy="70.800" r="6"/><circle cx="128.700" cy="174.200" r="6"/><circle cx="180" cy="94.700" r="6"/><circle cx="231.700" cy="125" r="6"/></g></svg>
            <i class="h tl"></i><i class="h ml"></i><i class="h mr"></i><i class="h bl"></i><i class="h bm"></i><i class="h br"></i>
            <span class="hb move"><svg width="16" height="16" viewBox="0 0 16 16"><path d="M8 1V15M1 8H15" stroke="#1f5fb1" stroke-width="1.800"/><path d="M5.500 3L8 0L10.500 3zM5.500 13L8 16L10.500 13zM3 5.500L0 8L3 10.500zM13 5.500L16 8L13 10.500z" fill="#1f5fb1"/></svg></span>
            <span class="hb pop"><svg width="16" height="14" viewBox="0 0 16 14" fill="none" stroke="#1f5fb1"><path d="M.5 1.500H15.500V13.500H.5z"/><path d="M0 1.500H16" stroke-width="3"/><path d="M6.500 11L13 5M8.500 5H13.500V10" stroke-width="1.500"/></svg></span>
          </article>
          <div class="mark mark-widget"></div>
        </div>
      </section>
      <aside class="fields">
        <div class="req"><em>*</em> Required field</div>
        <div class="slot"><svg width="16" height="16" viewBox="0 0 16 16" fill="none"><path d="M3 1V11M1 3L3 1L5 3" stroke="#aec3e3" stroke-width="1.200"/><path d="M3 12H14M11.500 9L14.500 12L11.500 15" stroke="#1f5fb1" stroke-width="1.400"/></svg><span>x-axis <em>*</em></span></div>
        <div class="slot"><svg width="16" height="16" viewBox="0 0 16 16"><path d="M4 5C7 1 15 2 15.500 7.500C16 12 9 15.500 4 13.500C1 12.500-.5 9.500 .5 7C3 6.500 5 8 6 7C6.500 6 5 6 4 5Z" fill="#1f5fb1"/><g fill="#fff"><circle cx="3" cy="9.500" r="1"/><circle cx="6" cy="11.500" r="1"/><circle cx="9.500" cy="11" r="1"/><circle cx="12.500" cy="9" r="1"/><circle cx="12.500" cy="6" r="1"/></g></svg><span>Color</span></div>
        <div class="slot"><svg width="16" height="16" viewBox="0 0 16 16" fill="none" stroke="#1f5fb1" stroke-width="1.400"><path d="M6.500 .5L3.500 15.500M12 .5L9 15.500M2 5.500H14.500M1.500 10.500H14"/></svg><span>y-axis <em>*</em></span></div>
        <div class="slot"><svg width="16" height="16" viewBox="0 0 16 16"><path d="M1 5.500H7V11.500H1z" fill="#fff" stroke="#86a5d6"/><path d="M7 5H9V12H7z" fill="#aec3e3"/><path d="M9 5H16V12H9z" fill="#1f5fb1"/></svg><span>Repeat (column)</span></div>
        <div class="slot"><svg width="16" height="16" viewBox="0 0 16 16"><path d="M4.500 1H11.500V7H4.500z" fill="#fff" stroke="#86a5d6"/><path d="M4 7H12V9H4z" fill="#aec3e3"/><path d="M4 9H12V16H4z" fill="#1f5fb1"/></svg><span>Repeat (row)</span></div>
        <div class="slot end"><svg width="16" height="16" viewBox="0 0 16 16" fill="none" stroke="#1f5fb1" stroke-width="1.100"><path d="M2.500 3H13.500V5.500L9.500 9.500V14H6.500V9.500L2.500 5.500Z"/></svg><span>Local filters</span></div>
        <div class="note"><svg width="16" height="16" viewBox="0 0 16 16" class="g"><circle cx="8" cy="8" r="6.700"/><path d="M6.500 7H8.500V11.500M6.500 11.500H10.500M8 4.300V5.300"/></svg><p>Drag and drop data to the fields above to build and filter the visualization.</p></div>
      </aside>
    </div>
  </main>
</div>
</body>
</html>
```
FILE: styles.css
```css
* { box-sizing: border-box; }
html, body { margin: 0; height: 100%; }
body { width: 1916px; height: 944px; overflow: hidden; background: #fff; font-family: Roboto, "Open Sans", sans-serif; font-size: 14px; color: #3a3a3a; display: flex; flex-direction: column; }
svg { display: block; flex: none; }
h2, h3, p { margin: 0; }

.w { fill: none; stroke: #fff; stroke-width: 1.5; }
.n { fill: none; stroke: #1d3a6b; stroke-width: 1.4; }
.g { fill: none; stroke: #5a5a5a; stroke-width: 1; }
.pin { stroke-width: 1.6; }
.d { fill: #1f5fb1; }
.l { fill: #aec3e3; }
.ds { fill: none; stroke: #1f5fb1; stroke-width: 1.2; }
.ls { fill: none; stroke: #aec3e3; stroke-width: 1.2; }
.thin { stroke-width: .9; }
.mid { stroke-width: 1.8; }
.thick { stroke-width: 2.6; }
.wide { stroke-width: 4; }
.svgt { fill: #1f5fb1; font-family: "Liberation Sans", sans-serif; font-weight: bold; }

.topbar { height: 45px; flex: none; background: #1f5fb1; display: flex; overflow: hidden; position: relative; color: #fff; }
.tb-item { width: 48px; height: 42px; display: flex; align-items: center; justify-content: center; flex: none; }
.save { width: 63px; justify-content: flex-start; padding-left: 14px; gap: 9px; }
.edit { background: #1e3763; height: 45px; padding-bottom: 4px; }
.dim { opacity: .3; }
.title { position: absolute; left: 900px; top: 0; height: 41px; display: flex; align-items: center; gap: 12px; font-weight: 500; letter-spacing: .1px; }
.tb-right { display: flex; margin-left: auto; margin-right: -3px; }
.days { width: 22px; height: 22px; border-radius: 50%; background: #fff; color: #1f5fb1; font-size: 14px; line-height: 23px; text-align: center; }
.bell { position: relative; }
.badge { position: absolute; left: 26px; top: 5px; width: 16px; height: 16px; border-radius: 50%; background: #e62325; font-size: 11px; font-weight: 700; line-height: 16px; text-align: center; }

.body { flex: 1; display: flex; min-height: 0; }
.rail { width: 48px; background: #ededed; display: flex; flex-direction: column; flex: none; }
.r-item { height: 48px; display: flex; align-items: center; justify-content: center; flex: none; }
.r-line { border-bottom: 1px solid #1d3a6b; }
.on { background: #fff; border-left: 4px solid #1f5fb1; padding-right: 4px; }
.r-gap { flex: 1; }
.r-add { height: 50px; padding-top: 14px; }

.panel { width: 392px; flex: none; padding: 27px 20px 0; position: relative; }
.panel h2 { font-size: 14px; line-height: 18px; font-weight: 700; color: #323232; letter-spacing: .2px; }
.ptabs { display: flex; width: 351px; margin-top: 27px; border-bottom: 1px solid #e8e8e8; padding-left: 2px; }
.ptab { width: 172px; height: 28px; line-height: 20px; text-align: center; font-weight: 700; font-size: 14px; color: #323232; margin-right: 4px; }
.sel { border-bottom: 4px solid #1f5fb1; margin-bottom: 1px; }
.tiles { display: grid; grid-template-columns: repeat(5, 70px); grid-auto-rows: 70px; margin-top: 8px; }
.tile { display: flex; flex-direction: column; align-items: center; padding-top: 8px; font-size: 12px; line-height: 15px; text-align: center; }
.tile svg { width: 28px; height: 28px; margin-bottom: 7px; }
.tile span { width: 62px; }
.mark { position: absolute; border: 7px solid #ff316d; border-radius: 4px; }
.mark-tile { left: 241px; top: 253px; width: 57px; height: 52px; }
.splitter { width: 8px; background: #ebebeb; flex: none; padding: 449px 0 0 2px; }
.splitter i, .fsplit i { display: block; width: 4px; height: 16px; border: solid #666; border-width: 0 1px; background: #bbb; }

.main { flex: 1; display: flex; flex-direction: column; min-width: 0; }
.toolbar { height: 41px; flex: none; border-bottom: 1px solid #e8e8e8; display: flex; color: #5a5a5a; }
.t-item { width: 41px; border-right: 1px solid #efefef; display: flex; align-items: center; justify-content: center; padding-top: 3px; flex: none; gap: 8px; }
.t-item span { margin-top: -1px; letter-spacing: .1px; }
.t-line { width: 71px; gap: 7px; padding-right: 2px; }
.last { border-right: 0; }
.t-gap { flex: 1; }
.t-filters { width: 101px; justify-content: flex-start; padding-left: 9px; border: 0; }
.t-fields { width: 100px; justify-content: flex-start; padding-left: 9px; border: 0; background: #c6c6c6; color: #111; }
.t-props { width: 118px; justify-content: flex-start; padding-left: 10px; border: 0; }
.filters { height: 73px; flex: none; border-bottom: 1px solid #e8e8e8; display: flex; }
.fpane { display: flex; flex: 1; }
.f-all { flex: none; width: 737px; }
.fico { width: 100px; display: flex; flex-direction: column; align-items: center; padding-top: 19px; gap: 3px; color: #1d3a6b; font-size: 11px; line-height: 14px; }
.fhint { width: 586px; text-align: center; line-height: 74px; color: #9b9b9b; letter-spacing: .08px; }
.fdots { display: flex; gap: 2.5px; padding: 14.5px 0 0 5px; }
.fdots i { width: 3.6px; height: 3.6px; border-radius: 50%; background: #111; }
.fsplit { width: 8px; background: #ebebeb; padding: 28px 0 0 2px; }
.fsplit i { border-color: #333; }

.work { flex: 1; display: flex; min-height: 0; }
.stage { flex: 1; padding: 0 0 0 12px; display: flex; flex-direction: column; }
.dtabs { width: 1128px; height: 41px; border-bottom: 1px solid #e8e8e8; display: flex; padding-left: 1px; flex: none; }
.dtab { width: 169px; height: 40px; border-bottom: 2px solid #1f5fb1; text-align: center; line-height: 47px; font-weight: 700; color: #323232; letter-spacing: .32px; }
.plus { margin: 11px 0 0 14px; }
.canvas { position: relative; flex: 1; }
.sheet { position: absolute; left: 11px; top: 12px; width: 1105px; height: 622px; border: 1px solid #dcdcdc; background-image: linear-gradient(to right, #f1f1f1 1px, transparent 1px), linear-gradient(to bottom, #f1f1f1 1px, transparent 1px); background-size: 11.045px 11.055px; background-position: -1px 0; }
.mapw { position: absolute; left: 10px; top: 12px; width: 499px; height: 623px; background: #fff; padding: 11px 11px 0 10px; }
.mapw h3 { font: 400 20px/26px "Liberation Sans", Arial, sans-serif; color: #111; padding-left: 9px; letter-spacing: -.15px; white-space: nowrap; }
.legends { display: flex; gap: 22px; padding: 7px 0 0 12px; height: 66px; }
.legend { width: 100px; font-size: 8.5px; color: #8f8f8f; }
.legend b { display: block; font-size: 11px; line-height: 14px; letter-spacing: .45px; margin: 1px 0 3px; white-space: nowrap; color: #8c8c8c; }
.ramp { height: 16px; background: linear-gradient(90deg, #ee3124, #fb7a00 25%, #fdb900 50%, #b5bd0e 70%, #3cc279 100%); }
.legend p { display: flex; justify-content: space-between; line-height: 10px; padding-top: 4px; letter-spacing: .3px; }
.map { position: relative; width: 478px; height: 509px; overflow: hidden; margin-left: 1px; }
.map text { font-family: Roboto, sans-serif; text-anchor: middle; paint-order: stroke; }
.city text { font-size: 46px; font-weight: 500; fill: #161616; stroke: #fff; stroke-opacity: .7; stroke-width: 5px; }
.city .big { font-size: 50px; }
.city .huge { font-size: 54px; }
.town text { font-size: 43px; fill: #4c4c4c; stroke: #fff; stroke-opacity: .75; stroke-width: 5px; }
.town .small { font-size: 36px; }
.park text { font-size: 35px; fill: #3f8c27; stroke: #fff; stroke-opacity: .6; stroke-width: 4px; }
.park .cut { text-anchor: start; }
.air text { font-size: 36px; fill: #6570c5; stroke: #fff; stroke-opacity: .7; stroke-width: 4px; }
.sh text { font-size: 27px; font-weight: 700; fill: #fff; }
.rt text { font-size: 28px; font-weight: 700; fill: #666a9c; }
.mbtn { width: 30px; background: #fff; border-radius: 4px; box-shadow: 0 0 0 2px rgba(0,0,0,.1); min-height: 30px; display: flex; align-items: center; justify-content: center; }
.layers { position: absolute; left: 10px; top: 10px; }
.mctl { position: absolute; right: 10px; top: 10px; display: flex; flex-direction: column; gap: 10px; }
.zoomer { flex-direction: column; }
.zoomer div { width: 30px; height: 30px; display: flex; align-items: center; justify-content: center; }
.zoomer div + div { border-top: 1px solid #ddd; }
.linew { position: absolute; left: 689px; top: 73px; width: 413px; height: 310px; border: 2px solid #1f5fb1; background: #fff; padding: 32px 0 0 77px; }
.h { position: absolute; width: 8px; height: 8px; border: 1px solid #1f5fb1; background: #fff; }
.tl { left: -5px; top: -5px; } .ml { left: -5px; top: 149px; } .mr { right: -5px; top: 149px; }
.bl { left: -5px; bottom: -5px; } .bm { left: 201px; bottom: -5px; } .br { right: -5px; bottom: -5px; }
.hb { position: absolute; width: 24px; height: 24px; top: -13px; border: 1px solid #1f5fb1; background: #fff; display: flex; align-items: center; justify-content: center; }
.move { left: 193px; } .pop { right: -13px; }
.mark-widget { left: 644px; top: 40px; width: 497px; height: 402px; }

.fields { width: 317px; flex: none; border-left: 1px solid #e8e8e8; padding-left: 8px; }
.req { font-size: 12px; font-weight: 700; line-height: 16px; padding: 16px 0 0 0; height: 33px; color: #323232; white-space: pre; letter-spacing: .2px; }
.fields em { color: #e62325; font-style: normal; font-weight: 700; }
.req em { font-size: 16px; line-height: 10px; }
.slot { height: 57px; border-bottom: 1px solid #e8e8e8; display: flex; align-items: center; padding-left: 16px; gap: 8px; font-weight: 700; color: #323232; letter-spacing: .22px; }
.slot em { font-size: 19px; line-height: 10px; margin-left: 1px; }
.end { height: 61px; padding-bottom: 5px; }
.note { display: flex; padding: 18px 8px 0 16px; gap: 8px; line-height: 20px; letter-spacing: .04px; }
.note svg { margin-top: 2px; }
```
